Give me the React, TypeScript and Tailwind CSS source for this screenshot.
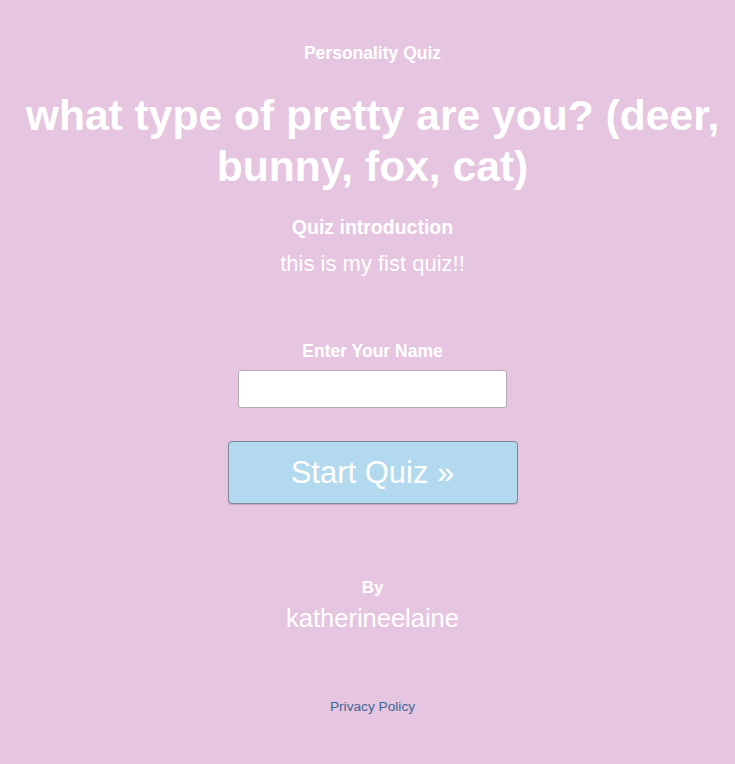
export default function App() {
  return (
    <div className="min-h-[764px] w-full bg-[#e5c5e0] flex flex-col items-center text-center text-white pl-[10px]" style={{ fontFamily: '"Liberation Sans", Arial, sans-serif' }}>
      <div className="mt-[42px] text-[17.5px] font-bold leading-[22px]">Personality Quiz</div>
      <h1 className="mt-[26px] px-[6px] text-[42.6px] font-bold leading-[51px]">what type of pretty are you? (deer, bunny, fox, cat)</h1>
      <div className="mt-[23px] text-[19.5px] font-bold leading-[24px]">Quiz introduction</div>
      <div className="mt-[12px] text-[22px] leading-[26px]">this is my fist quiz!!</div>
      <div className="mt-[63px] text-[17.5px] font-bold leading-[22px]">Enter Your Name</div>
      <input type="text" className="mt-[8px] w-[269px] h-[38px] bg-white rounded-[3px] border border-[#b8a9b6] outline-none" />
      <button className="mt-[33px] w-[290px] h-[63px] bg-[#b3d9ee] rounded-[4px] border border-[#7d8798] shadow-[0_1px_1px_rgba(0,0,0,0.15)] text-[31px] text-white leading-none">Start Quiz »</button>
      <div className="mt-[73px] text-[17px] font-bold leading-[22px]">By</div>
      <div className="mt-[4px] text-[25.5px] leading-[30px]">katherineelaine</div>
      <div className="mt-[65px] text-[13.7px] leading-[18px] text-[#3d6797]">Privacy Policy</div>
    </div>
  );
}
